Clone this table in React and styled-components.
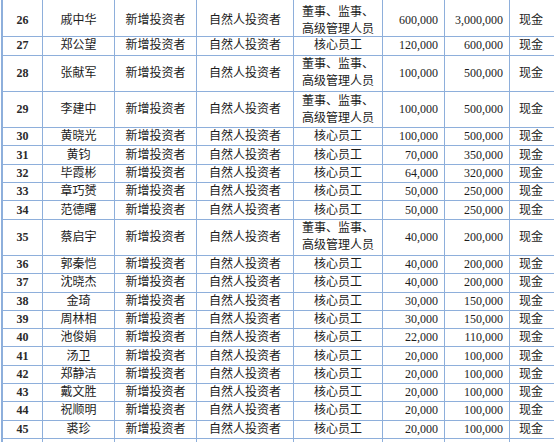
import React from "react";
import styled, { createGlobalStyle } from "styled-components";

const Global = createGlobalStyle`
  html, body { margin: 0; padding: 0; background: #ffffff; overflow: hidden; }
  #root { width: 554px; height: 442px; overflow: hidden; }
`;

const LINE = "#8eafdb";

const Table = styled.div`
  margin-left: 1px;
  width: 600px;
  border-left: 2px solid ${LINE};
  font-family: "Liberation Serif", "Noto Sans CJK SC", serif;
  font-size: 12px;
  color: #1c1c1c;
`;

const Row = styled.div`
  display: grid;
  grid-template-columns: 40px 72px 82px 97px 89px 62px 65px 60px;
  height: ${(p) => p.$h}px;
  padding-top: ${(p) => p.$pt || 0}px;
  box-sizing: border-box;
  border-bottom: 1px solid ${LINE};
`;

const Cell = styled.div`
  display: flex;
  align-items: center;
  justify-content: ${(p) => (p.$align === "right" ? "flex-end" : p.$align === "left" ? "flex-start" : "center")};
  padding: ${(p) => (p.$align === "right" ? "0 6px 0 0" : p.$align === "left" ? "0 0 0 9px" : "0")};
  border-right: 1px solid ${LINE};
  margin-top: ${(p) => (p.$pt ? -p.$pt : 0)}px;
  text-align: center;
  white-space: nowrap;
  overflow: hidden;
`;

const Inner = styled.span`
  display: block;
  line-height: 17px;
  margin-top: ${(p) => p.$shift || 0}px;
`;

const Num = styled.span`
  font-weight: bold;
  color: #2a2a2a;
`;

const rows = [
  [26, "戚中华", true, "600,000", "3,000,000"],
  [27, "郑公望", false, "120,000", "600,000"],
  [28, "张献军", true, "100,000", "500,000"],
  [29, "李建中", true, "100,000", "500,000"],
  [30, "黄晓光", false, "100,000", "500,000"],
  [31, "黄钧", false, "70,000", "350,000"],
  [32, "毕霞彬", false, "64,000", "320,000"],
  [33, "章巧赟", false, "50,000", "250,000"],
  [34, "范德曙", false, "50,000", "250,000"],
  [35, "蔡启宇", true, "40,000", "200,000"],
  [36, "郭秦恺", false, "40,000", "200,000"],
  [37, "沈晓杰", false, "40,000", "200,000"],
  [38, "金琦", false, "30,000", "150,000"],
  [39, "周林相", false, "30,000", "150,000"],
  [40, "池俊娟", false, "22,000", "110,000"],
  [41, "汤卫", false, "20,000", "100,000"],
  [42, "郑静洁", false, "20,000", "100,000"],
  [43, "戴文胜", false, "20,000", "100,000"],
  [44, "祝顺明", false, "20,000", "100,000"],
  [45, "裘珍", false, "20,000", "100,000"],
];

export default function App() {
  return (
    <>
      <Global />
      <Table>
        {rows.map(([no, name, exec, shares, amount], i) => {
          const h = i === 0 ? 37.3 : exec ? 36.3 : 18.3;
          const shift = i === 0 ? 5 : 0;
          return (
            <Row key={no} $h={h}>
              <Cell><Inner $shift={shift}><Num>{no}</Num></Inner></Cell>
              <Cell><Inner $shift={shift}>{name}</Inner></Cell>
              <Cell><Inner $shift={shift}>新增投资者</Inner></Cell>
              <Cell><Inner $shift={shift}>自然人投资者</Inner></Cell>
              <Cell>
                {exec ? (
                  <Inner $shift={shift}>董事、监事、<br />高级管理人员</Inner>
                ) : (
                  <Inner $shift={shift}>核心员工</Inner>
                )}
              </Cell>
              <Cell $align="right"><Inner $shift={shift}>{shares}</Inner></Cell>
              <Cell $align="right"><Inner $shift={shift}>{amount}</Inner></Cell>
              <Cell $align="left"><Inner $shift={shift}>现金</Inner></Cell>
            </Row>
          );
        })}
        <Row $h={18.3}>
          <Cell /><Cell /><Cell /><Cell /><Cell /><Cell /><Cell /><Cell />
        </Row>
      </Table>
    </>
  );
}
